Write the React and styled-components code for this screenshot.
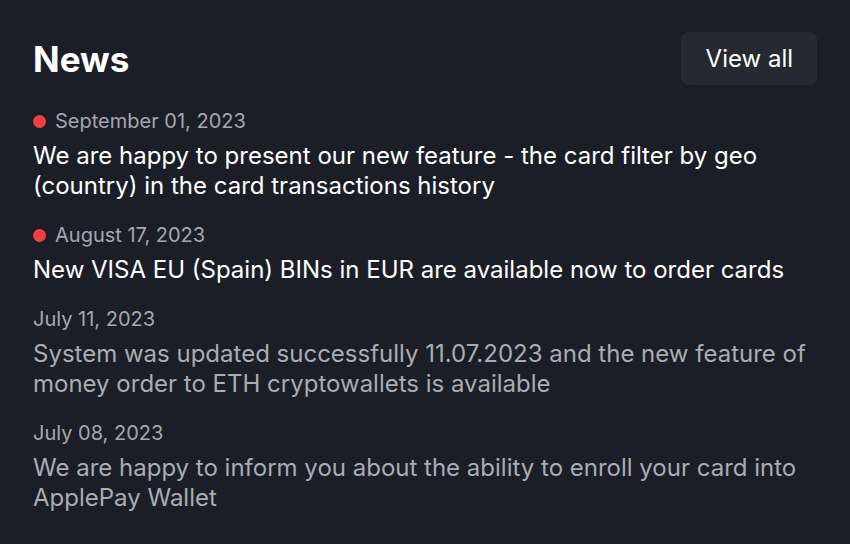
import React from 'react'
import styled, { createGlobalStyle } from 'styled-components'

const GlobalStyle = createGlobalStyle`
    html, body {
        margin: 0;
        padding: 0;
        background: #1c1e27;
    }
    body {
        font-family: Inter, "Noto Sans", sans-serif;
        -webkit-font-smoothing: antialiased;
    }
`

const Panel = styled.div`
    width: 850px;
    height: 544px;
    box-sizing: border-box;
    padding: 32px 33px 0 33px;
    background: #1c1e27;
    overflow: hidden;
`

const Header = styled.div`
    display: flex;
    align-items: center;
    justify-content: space-between;
    height: 53px;
    margin-bottom: 24px;
`

const Title = styled.h2`
    margin: 0;
    font-size: 35px;
    font-weight: 700;
    color: #ffffff;
`

const ViewAll = styled.button`
    height: 53px;
    padding: 0 24px 0 25px;
    border: none;
    border-radius: 8px;
    background: #262932;
    color: #ffffff;
    font-family: inherit;
    font-size: 24px;
    cursor: pointer;
`

const List = styled.div`
    display: flex;
    flex-direction: column;
    gap: 22px;
`

const Item = styled.div`
    display: flex;
    flex-direction: column;
    gap: 8px;
`

const DateRow = styled.div`
    display: flex;
    align-items: center;
    gap: 9px;
    height: 24px;
    font-size: 20px;
    color: #a4a7af;
`

const Dot = styled.span`
    width: 13px;
    height: 13px;
    border-radius: 50%;
    background: #f43f3f;
`

const Text = styled.div`
    font-size: 24px;
    line-height: 30px;
    color: ${p => (p.$unread ? '#ffffff' : '#a9acb4')};
`

const news = [
    {
        date: 'September 01, 2023',
        unread: true,
        text: 'We are happy to present our new feature - the card filter by geo (country) in the card transactions history',
    },
    {
        date: 'August 17, 2023',
        unread: true,
        text: 'New VISA EU (Spain) BINs in EUR are available now to order cards',
    },
    {
        date: 'July 11, 2023',
        unread: false,
        text: 'System was updated successfully 11.07.2023 and the new feature of money order to ETH cryptowallets is available',
    },
    {
        date: 'July 08, 2023',
        unread: false,
        text: 'We are happy to inform you about the ability to enroll your card into ApplePay Wallet',
    },
]

const App = () => {
    return (
        <Panel>
            <GlobalStyle />
            <Header>
                <Title>News</Title>
                <ViewAll>View all</ViewAll>
            </Header>
            <List>
                {news.map(n => (
                    <Item key={n.date}>
                        <DateRow>
                            {n.unread && <Dot />}
                            {n.date}
                        </DateRow>
                        <Text $unread={n.unread}>{n.text}</Text>
                    </Item>
                ))}
            </List>
        </Panel>
    )
}

export default App
